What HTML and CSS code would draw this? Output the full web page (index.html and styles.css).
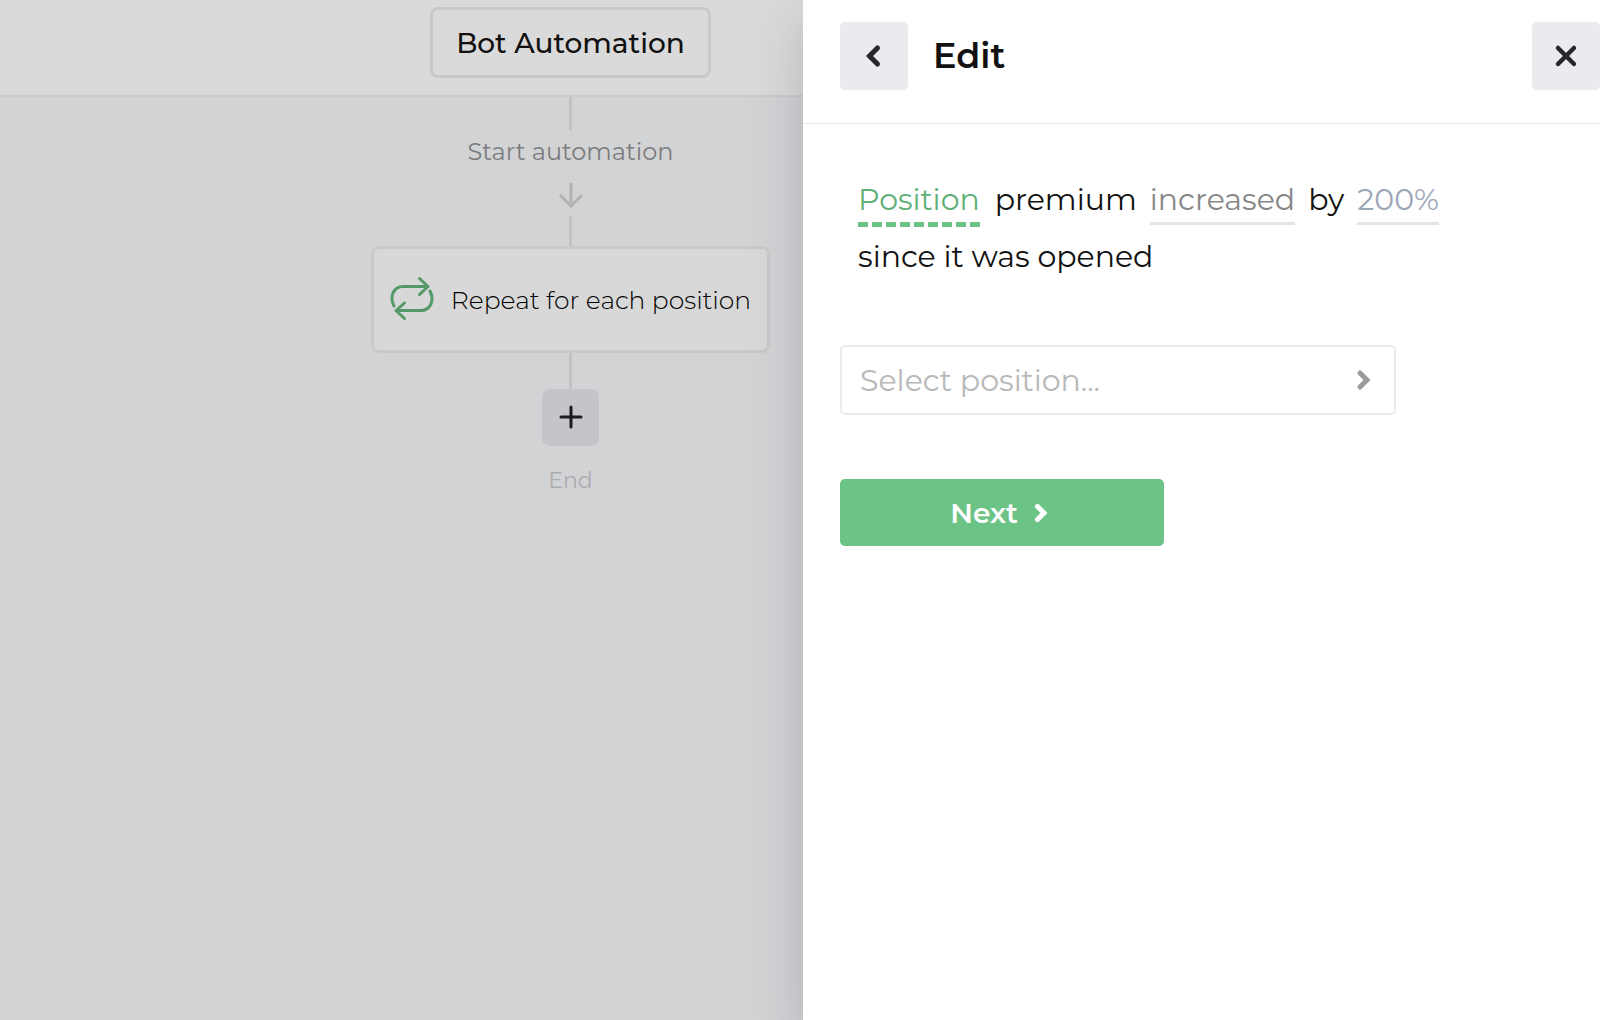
FILE: index.html
```
<!DOCTYPE html>
<html lang="en">
<head>
  <meta charset="UTF-8">
  <title>Bot Automation</title>
  <meta name="viewport" content="width=device-width, initial-scale=1.0">
  <link rel="stylesheet" href="styles.css">
</head>
<body>
  <div class="app">
    <main class="editor">
      <header class="topbar">
        <div class="column">
          <button class="bot-title" type="button">Bot Automation</button>
        </div>
      </header>
      <section class="canvas">
        <div class="column flow">
          <div class="line line-start"></div>
          <p class="start-label">Start automation</p>
          <svg class="arrow" width="24" height="26" viewBox="0 0 24 26" fill="none" stroke="#b2b2b3" stroke-width="3">
            <path d="M12 1v22M1 13l11 11 11-11"/>
          </svg>
          <div class="line line-mid"></div>
          <button class="node" type="button">
            <svg width="44" height="48" viewBox="0 0 44 48" fill="none" stroke="#539a68" stroke-width="3" stroke-linecap="round" stroke-linejoin="round">
              <path d="M4 30C-1 20 4 10.500 13 10.500H37M29.500 2.500l8.500 8-8.500 8"/>
              <path d="M40 15C45 25 40 34.500 31 34.500H7M14.500 27l-8.500 7.500 8.500 8"/>
            </svg>
            <span>Repeat for each position</span>
          </button>
          <div class="line line-end"></div>
          <button class="add" type="button" aria-label="Add step">
            <svg width="24" height="26" viewBox="0 0 24 26" fill="none" stroke="#1b1b20" stroke-width="3" stroke-linecap="round">
              <path d="M12 2v20M2 12h20"/>
            </svg>
          </button>
          <p class="end-label">End</p>
        </div>
      </section>
    </main>

    <aside class="drawer">
      <header class="drawer-header">
        <button class="icon-btn" type="button" aria-label="Back">
          <svg width="24" height="24" viewBox="0 0 24 24" fill="none" stroke="#25272d" stroke-width="5" stroke-linecap="round">
            <path d="M15.500 4l-8 8 8 8"/>
          </svg>
        </button>
        <h1>Edit</h1>
        <button class="icon-btn close" type="button" aria-label="Close">
          <svg width="24" height="24" viewBox="0 0 24 24" fill="none" stroke="#25272d" stroke-width="4.500" stroke-linecap="round">
            <path d="M4 4l16 16M20 4L4 20"/>
          </svg>
        </button>
      </header>
      <form class="drawer-body">
        <p class="sentence">
          <a class="token active" href="#position">Position</a>
          <span>premium</span>
          <a class="token" href="#direction">increased</a>
          <span>by</span>
          <a class="token amount" href="#amount">200%</a>
          <span>since it was opened</span>
        </p>
        <div class="select-wrap">
          <select id="position" aria-label="Position">
            <option>Select position...</option>
          </select>
          <svg class="select-icon" width="24" height="24" viewBox="0 0 24 24" fill="none" stroke="#9b9b9b" stroke-width="5" stroke-linecap="round">
            <path d="M8 5l7 7-7 7"/>
          </svg>
        </div>
        <button class="next" type="button">
          <span>Next</span>
          <svg width="24" height="24" viewBox="0 0 24 24" fill="none" stroke="#fff" stroke-width="5" stroke-linecap="round">
            <path d="M7.500 5.500l6.500 6.500-6.500 6.500"/>
          </svg>
        </button>
      </form>
    </aside>
  </div>
</body>
</html>
```

FILE: styles.css
```
* { margin: 0; padding: 0; box-sizing: border-box; }
body {
  font-family: Montserrat, Inter, sans-serif;
  color: #111;
  background: #d2d3d5;
}
button, select {
  font-family: inherit;
  color: inherit;
  border: none;
  cursor: pointer;
}
svg {
  display: block;
  flex: none;
}
.app {
  display: grid;
  grid-template-columns: 803fr 797fr;
  min-height: 100vh;
}

/* left side */
.topbar, .canvas {
  display: flex;
  justify-content: flex-end;
  padding-right: 33px;
}
.topbar {
  height: 97px;
  padding-top: 7px;
  background: #dadada;
  border-bottom: 2px solid #cbcbcc;
}
.column {
  width: 399px;
  display: flex;
  flex-direction: column;
  align-items: center;
}
.bot-title {
  height: 71px;
  padding: 0 23px;
  font-size: 28px;
  font-weight: 500;
  background: #dadada;
  border: 3px solid #c9c9ca;
  border-radius: 8px;
}
.line {
  width: 3px;
  background: #c2c1c4;
}
.line-start { height: 33px; }
.line-mid { height: 30px; }
.line-end { height: 36px; }
.start-label {
  font-size: 24px;
  line-height: 30px;
  margin: 7px 0 15px;
  color: #7c7c7e;
}
.arrow { margin-bottom: 8px; }
.node {
  width: 100%;
  height: 107px;
  display: flex;
  align-items: center;
  justify-content: center;
  gap: 17px;
  font-size: 25px;
  font-weight: 300;
  color: #000;
  white-space: nowrap;
  background: #d8d8d8;
  border: 3px solid #c9c9cb;
  border-radius: 8px;
}
.add {
  width: 57px;
  height: 57px;
  display: grid;
  place-items: center;
  background: #c4c5cb;
  border-radius: 8px;
}
.end-label {
  margin-top: 20px;
  font-size: 22px;
  line-height: 30px;
  color: #acacae;
}

/* drawer */
.drawer {
  position: relative;
  background: #fff;
  box-shadow: 0 20px 48px rgba(80, 75, 85, 0.25);
}
.drawer-header {
  display: flex;
  align-items: center;
  height: 124px;
  padding: 0 0 12px 37px;
  border-bottom: 1px solid #e9e9e9;
}
.drawer-header h1 {
  margin-left: 25px;
  font-size: 35px;
  line-height: 44px;
  font-weight: 600;
}
.icon-btn {
  width: 68px;
  height: 68px;
  display: grid;
  place-items: center;
  background: #ebebef;
  border-radius: 5px;
}
.close { margin-left: auto; }
.drawer-body { padding: 47px 37px; }
.sentence {
  display: flex;
  flex-wrap: wrap;
  column-gap: 13px;
  max-width: 640px;
  padding-left: 18px;
  font-size: 30px;
  line-height: 57px;
}
.token {
  height: 57px;
  color: #878787;
  text-decoration: none;
  background: linear-gradient(#e4e4e4, #e4e4e4) 0 51px / 100% 3px no-repeat;
}
.active {
  padding-right: 2px;
  color: #5fb078;
  background: repeating-linear-gradient(90deg, #6cc386 0 10px, transparent 10px 14px) 0 51px / 100% 5px no-repeat;
}
.amount { color: #9aa5b6; }
.select-wrap {
  position: relative;
  max-width: 556px;
  margin: 60px 0 64px;
}
.select-wrap select {
  appearance: none;
  display: block;
  width: 100%;
  height: 70px;
  padding: 0 60px 0 18px;
  font-size: 30px;
  color: #b8b8b8;
  background: #fff;
  border: 2px solid #ebebeb;
  border-radius: 5px;
}
.select-icon {
  position: absolute;
  top: 23px;
  right: 20px;
  pointer-events: none;
}
.next {
  width: 324px;
  height: 67px;
  display: flex;
  align-items: center;
  justify-content: center;
  gap: 12px;
  font-size: 28px;
  font-weight: 600;
  color: #fff;
  background: #6cc386;
  border-radius: 5px;
}
```
